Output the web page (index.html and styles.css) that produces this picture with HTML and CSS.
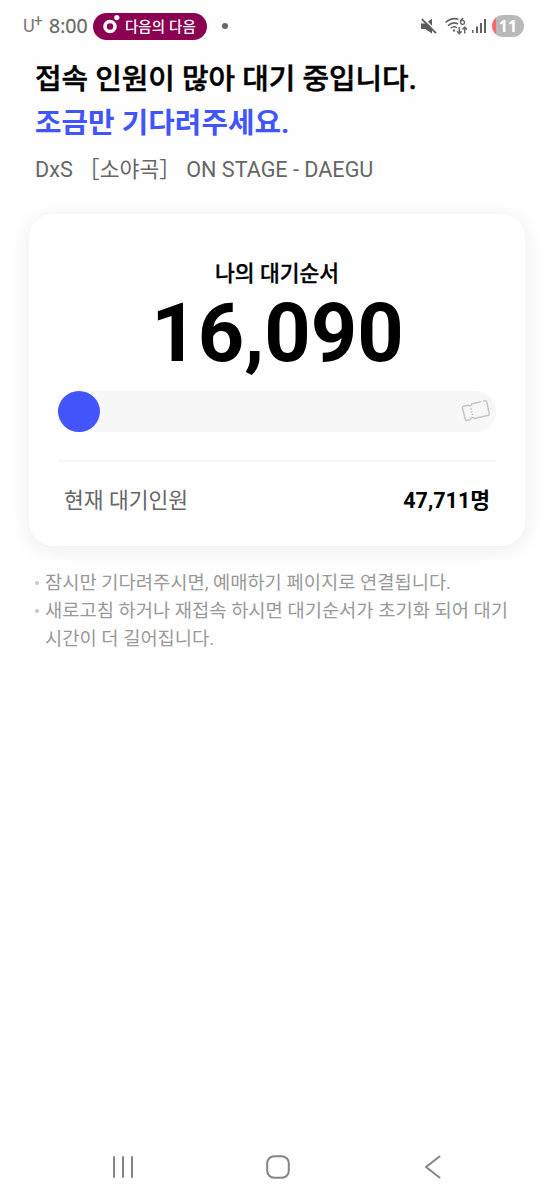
FILE: index.html
```html
<!DOCTYPE html>
<html lang="ko">
<head>
<meta charset="utf-8">
<meta name="viewport" content="width=device-width, initial-scale=1">
<title>대기 안내</title>
<link rel="stylesheet" href="styles.css">
</head>
<body>
<div class="screen">
  <header class="status">
    <div class="status-left">
      <span class="carrier">U<span class="plus">+</span></span>
      <span class="clock">8:00</span>
      <span class="pill">
        <svg class="pill-icon" width="18" height="20" viewBox="0 0 18 20"><circle cx="7" cy="12.500" r="5" fill="none" stroke="#fff" stroke-width="3.600"/><circle cx="13.800" cy="3.600" r="2.600" fill="#fff"/></svg>
        <span class="pill-text">다음의 다음</span>
      </span>
      <span class="dot"></span>
    </div>
    <div class="status-right">
      <svg width="16" height="17" viewBox="0 0 16 17"><path d="M0 5.500h4.200L11 .8v14.700l-6.800-4.600H0z" fill="#5c5c5c"/><path d="M2.200.2 16 14" stroke="#fff" stroke-width="1.800"/><path d="M.8 1.200 15 15.200" stroke="#5c5c5c" stroke-width="1.800"/></svg>
      <svg class="wifi" width="23" height="18" viewBox="0 0 23 18" fill="none" stroke="#666" stroke-width="1.500"><path d="M.6 5.500Q6.500 0 13.500 2.300M3 8.600q5-4.500 10-1.600M5.600 11.300q3.200-2.800 6.300-.4"/><circle cx="9" cy="13.500" r="1.200" fill="#666" stroke="none"/><path d="M14.300 10v6.500m-2.300-2.200 2.300 2.400 2.300-2.400M19.700 16.500V10m-2.300 2.400 2.300-2.400 2.300 2.400"/><path d="M18.200 1.200q-3 1.700-2.700 4.300a2 2 0 1 0 .2-1" stroke-width="1.400"/></svg>
      <svg class="signal" width="15" height="16" viewBox="0 0 15 16" fill="#626262"><rect x="0" y="12" width="1.500" height="3"/><rect x="4" y="8.500" width="2" height="6.500"/><rect x="8" y="5" width="2" height="10"/><rect x="12" y="1" width="2" height="14"/></svg>
      <span class="battery">11</span>
    </div>
  </header>

  <main class="content">
    <h1 class="title">접속 인원이 많아 대기 중입니다.<br><span class="accent">조금만 기다려주세요.</span></h1>
    <p class="event">DxS ［소야곡］ ON STAGE - DAEGU</p>

    <section class="card">
      <p class="label">나의 대기순서</p>
      <p class="rank">16,090</p>
      <div class="track">
        <span class="thumb"></span>
        <svg class="ticket" width="30" height="25" viewBox="0 0 30 25" fill="none" stroke="#c6c6c6" stroke-width="1.500" stroke-linecap="round" stroke-linejoin="round"><path d="M19.500 2.800 10.800 5Q9.800 8 7.200 6.200L3.300 6.900Q1.200 7.300 1.500 9L4.300 20.300Q4.700 22 6.500 21.500L9.300 20.500Q11 17.200 13.500 19.400L26.500 16.600Q28.600 16 28.200 14.300L25.800 3Q25.300 1.300 22.700 2"/><path d="M10.300 9.700v.5M11.500 15.200v.2M10.800 12.600v.1"/></svg>
      </div>
      <div class="total">
        <span class="total-label">현재 대기인원</span>
        <strong class="total-value">47,711명</strong>
      </div>
    </section>

    <ul class="notes">
      <li>잠시만 기다려주시면, 예매하기 페이지로 연결됩니다.</li>
      <li>새로고침 하거나 재접속 하시면 대기순서가 초기화 되어 대기 시간이 더 길어집니다.</li>
    </ul>
  </main>

  <nav class="navbar">
    <svg width="24" height="24" viewBox="0 0 24 24" stroke="#858585" stroke-width="2" stroke-linecap="round"><path d="M3 2v20M12 2v20M21 2v20"/></svg>
    <svg width="24" height="24" viewBox="0 0 24 24" fill="none" stroke="#858585" stroke-width="2"><rect x="1.200" y="1.200" width="21.600" height="21.600" rx="7"/></svg>
    <svg width="24" height="24" viewBox="0 0 24 24" fill="none" stroke="#858585" stroke-width="2" stroke-linecap="round" stroke-linejoin="round"><path d="M18.500 1.500 5 12l13.500 10.500"/></svg>
  </nav>
</div>
</body>
</html>
```

FILE: styles.css
```css
* { box-sizing: border-box; }
body {
  margin: 0;
  background: #fefefe;
  color: #000;
  font-family: Roboto, "Noto Sans CJK KR", sans-serif;
}
h1, p, ul { margin: 0; padding: 0; }
svg { display: block; flex: none; }
.screen { height: 1200px; display: flex; flex-direction: column; }

.status {
  height: 52px;
  padding: 0 30px 0 23px;
  display: flex;
  align-items: center;
  justify-content: space-between;
}
.status-left, .status-right { display: flex; align-items: center; }
.carrier {
  width: 26px;
  color: #777;
  font: 400 18px/24px Roboto, sans-serif;
  white-space: nowrap;
}
.plus { margin-left: -1px; font-size: 16px; line-height: 10px; vertical-align: 6px; }
.clock {
  width: 44px;
  color: #666;
  font: 500 19.500px/26px "Open Sans", sans-serif;
  -webkit-text-stroke: .3px #666;
}
.pill {
  width: 114px;
  height: 27px;
  padding-left: 10px;
  display: flex;
  align-items: center;
  gap: 4px;
  border-radius: 14px;
  background: #8b0050;
  color: #fff;
}
.pill-icon { margin-top: -4px; }
.pill-text { font: 500 14.500px/24px "Noto Sans CJK KR", sans-serif; white-space: nowrap; }
.dot { width: 6px; height: 6px; margin-left: 15px; border-radius: 50%; background: #666; }
.wifi { margin-left: 8px; }
.signal { margin-left: 4px; }
.battery {
  width: 32px;
  height: 22px;
  margin-left: 5px;
  border-radius: 11px;
  background: linear-gradient(90deg, #f66 0 4px, #b9b9b9 4px);
  color: #fff;
  font: 700 16px/22px "Noto Sans", sans-serif;
  text-align: center;
}

.content { flex: 1; padding: 5px 29px 0; }
.title {
  padding-left: 6px;
  font-size: 28.850px;
  line-height: 44px;
  font-weight: 500;
  white-space: nowrap;
  -webkit-text-stroke: .5px #000;
}
.accent { color: #4255fb; font-weight: 700; -webkit-text-stroke: 0; }
.event { padding: 10px 0 0 6px; color: #666; font-size: 21.600px; line-height: 30px; white-space: nowrap; }

.card {
  height: 332px;
  margin-top: 29px;
  padding: 44px 29px 0;
  border-radius: 24px;
  background: #fff;
  box-shadow: 0 3px 20px rgba(0, 0, 0, .07);
}
.label { font-size: 21.500px; line-height: 32px; font-weight: 500; text-align: center; -webkit-text-stroke: .3px #000; }
.rank { padding-left: 1px; font-size: 81px; line-height: 88px; font-weight: 700; text-align: center; }
.track {
  height: 41px;
  margin-top: 13px;
  padding-right: 5px;
  display: flex;
  align-items: center;
  justify-content: space-between;
  border-radius: 21px;
  background: #f7f7f7;
}
.thumb { width: 42px; height: 41px; border-radius: 50%; background: #4255fb; }
.total {
  margin-top: 28px;
  padding: 23px 6px 0;
  display: flex;
  justify-content: space-between;
  border-top: 2px solid #f7f7f7;
  font-size: 21.500px;
  line-height: 32px;
}
.total-label { color: #666; }
.total-value { font-weight: 700; }

.notes {
  padding: 23px 0 0 6px;
  list-style: none;
  color: #999;
  font-size: 18.730px;
  line-height: 28px;
}
.notes li { display: flex; gap: 6px; }
.notes li::before {
  content: "";
  flex: none;
  width: 4px;
  height: 4px;
  margin-top: 12px;
  border-radius: 50%;
  background: #c8c8c8;
}

.navbar { height: 66px; padding: 0 109px 0 111px; display: flex; justify-content: space-between; align-items: center; }
```
